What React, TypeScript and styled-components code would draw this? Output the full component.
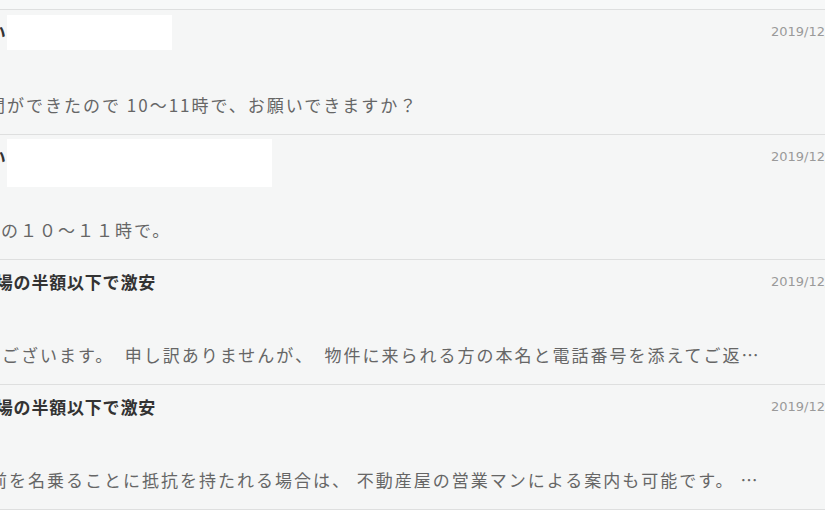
import React from "react";
import styled, { createGlobalStyle } from "styled-components";

const GlobalStyle = createGlobalStyle`
  html, body {
    margin: 0;
    padding: 0;
    background: #f5f6f6;
    overflow: hidden;
  }
`;

const Viewport = styled.div`
  width: 825px;
  height: 510px;
  overflow: hidden;
  background: #f5f6f6;
  font-family: "Noto Sans CJK JP", "Noto Sans", sans-serif;
`;

const TopStrip = styled.div`
  height: 9px;
  background: #f7f8f8;
  border-bottom: 1px solid #dedfdf;
`;

const List = styled.ul`
  list-style: none;
  margin: 0;
  padding: 0;
`;

const Row = styled.li`
  position: relative;
  display: grid;
  grid-template-columns: 1fr 54px;
  height: 124px;
  border-bottom: 1px solid #dedfdf;
`;

const Main = styled.div`
  min-width: 0;
  overflow: hidden;
  padding-top: 10px;
`;

const Title = styled.div<{ $lead: number }>`
  margin-left: ${(p) => p.$lead}px;
  height: 24px;
  line-height: 24px;
  font-size: 17px;
  font-weight: bold;
  letter-spacing: 0.8px;
  color: #333;
  white-space: nowrap;
`;

const Body = styled.div<{ $lead: number }>`
  margin-left: ${(p) => p.$lead}px;
  margin-top: 49px;
  height: 24px;
  line-height: 24px;
  font-size: 17px;
  letter-spacing: 2px;
  color: #666;
  white-space: nowrap;
`;

const Date = styled.div`
  padding-top: 12px;
  font-family: "DejaVu Sans", "Liberation Sans", sans-serif;
  font-size: 13px;
  line-height: 20px;
  color: #9a9a9a;
  white-space: nowrap;
`;

const Redaction = styled.span<{ $top: number; $w: number; $h: number }>`
  position: absolute;
  left: 7px;
  top: ${(p) => p.$top}px;
  width: ${(p) => p.$w}px;
  height: ${(p) => p.$h}px;
  background: #ffffff;
`;

type Message = {
  title: string;
  titleLead: number;
  body: string;
  bodyLead: number;
  date: string;
  redaction?: { top: number; w: number; h: number };
};

const messages: Message[] = [
  {
    title: "まい",
    titleLead: -29,
    body: "時間ができたので 10～11時で、お願いできますか？",
    bodyLead: -31,
    date: "2019/12/06 10:12",
    redaction: { top: 5, w: 165, h: 35 },
  },
  {
    title: "まい",
    titleLead: -29,
    body: "明日の１０～１１時で。",
    bodyLead: -37,
    date: "2019/12/05 21:40",
    redaction: { top: 4, w: 265, h: 48 },
  },
  {
    title: "相場の半額以下で激安",
    titleLead: -22,
    body: "うございます。\u2002申し訳ありませんが、\u2002物件に来られる方の本名と電話番号を添えてご返…",
    bodyLead: -17,
    date: "2019/12/05 18:03",
  },
  {
    title: "相場の半額以下で激安",
    titleLead: -22,
    body: "前を名乗ることに抵抗を持たれる場合は、 不動産屋の営業マンによる案内も可能です。 …",
    bodyLead: -10,
    date: "2019/12/05 17:55",
  },
];

export default function App() {
  return (
    <>
      <GlobalStyle />
      <Viewport>
        <TopStrip />
        <List>
          {messages.map((m, i) => (
            <Row key={i}>
              <Main>
                <Title $lead={m.titleLead}>{m.title}</Title>
                <Body $lead={m.bodyLead}>{m.body}</Body>
              </Main>
              <Date>{m.date}</Date>
              {m.redaction && (
                <Redaction
                  $top={m.redaction.top}
                  $w={m.redaction.w}
                  $h={m.redaction.h}
                />
              )}
            </Row>
          ))}
        </List>
      </Viewport>
    </>
  );
}
